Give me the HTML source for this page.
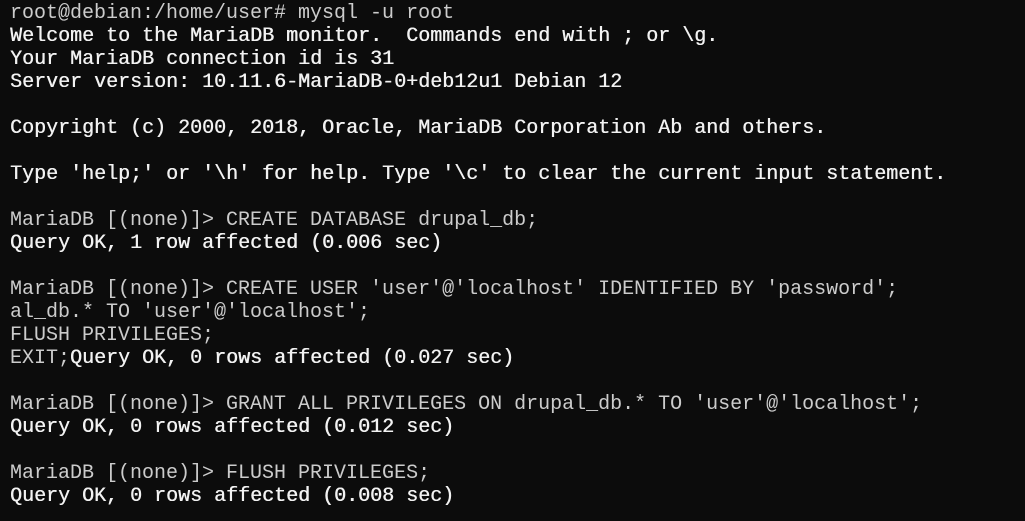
<!DOCTYPE html>
<html><head><style>
html,body{margin:0;padding:0;background:#0c0c0c;width:1025px;height:521px;overflow:hidden}
pre{margin:0;padding:2px 0 0 10px;font-family:"Liberation Mono",monospace;font-size:20px;line-height:23px;color:#cccccc;letter-spacing:0}
b{color:#f2f2f2;font-weight:normal;text-shadow:0.4px 0 0 #f2f2f2}
</style></head><body><pre>root@debian:/home/user# mysql -u root
<b>Welcome to the MariaDB monitor.  Commands end with ; or \g.</b>
<b>Your MariaDB connection id is 31</b>
<b>Server version: 10.11.6-MariaDB-0+deb12u1 Debian 12</b>

<b>Copyright (c) 2000, 2018, Oracle, MariaDB Corporation Ab and others.</b>

<b>Type 'help;' or '\h' for help. Type '\c' to clear the current input statement.</b>

MariaDB [(none)]&gt; CREATE DATABASE drupal_db;
<b>Query OK, 1 row affected (0.006 sec)</b>

MariaDB [(none)]&gt; CREATE USER 'user'@'localhost' IDENTIFIED BY 'password';
al_db.* TO 'user'@'localhost';
FLUSH PRIVILEGES;
EXIT;<b>Query OK, 0 rows affected (0.027 sec)</b>

MariaDB [(none)]&gt; GRANT ALL PRIVILEGES ON drupal_db.* TO 'user'@'localhost';
<b>Query OK, 0 rows affected (0.012 sec)</b>

MariaDB [(none)]&gt; FLUSH PRIVILEGES;
<b>Query OK, 0 rows affected (0.008 sec)</b>
</pre></body></html>
